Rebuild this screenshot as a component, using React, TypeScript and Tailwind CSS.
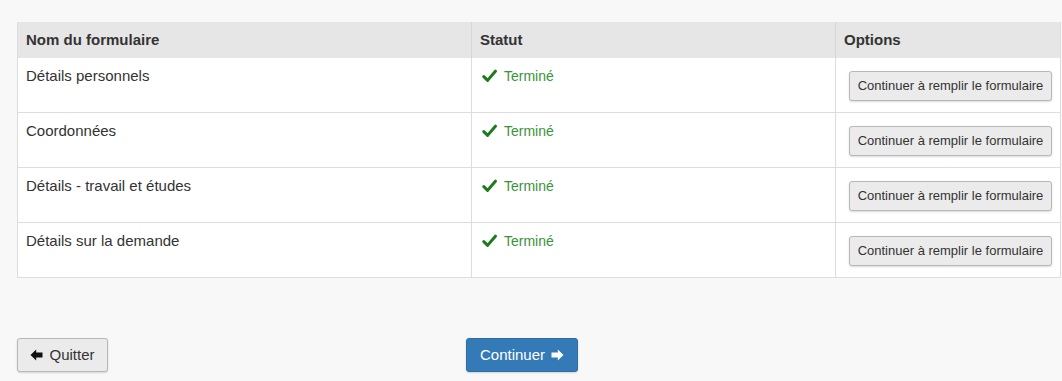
const forms = [
  "Détails personnels",
  "Coordonnées",
  "Détails - travail et études",
  "Détails sur la demande",
];

function Check() {
  return (
    <svg width="15" height="14" viewBox="0 0 15 14" className="shrink-0">
      <path d="M1.8 7.6 L5.6 11.4 L13.4 2.2" fill="none" stroke="#1d7a1d" strokeWidth="3" strokeLinecap="round" strokeLinejoin="round" />
    </svg>
  );
}

function Arrow({ dir }: { dir: "left" | "right" }) {
  return (
    <svg width="13" height="12" viewBox="0 0 13 12" className={dir === "left" ? "" : "rotate-180"}>
      <path d="M0.5 6 L6.2 0.6 L6.2 3.6 L12.5 3.6 L12.5 8.4 L6.2 8.4 L6.2 11.4 Z" fill="currentColor" strokeLinejoin="round" />
    </svg>
  );
}

export default function App() {
  return (
    <div className="min-h-[381px] bg-[#f8f8f8] pt-[22px] pl-[17px] font-['Liberation_Sans',Arial,sans-serif] text-[15px] text-[#333]">
      <div className="w-[1044px] border border-t-0 border-[#dddddd] bg-white">
        <div className="grid h-[36px] grid-cols-[453px_364px_1fr] bg-[#e6e6e6] font-bold">
          <div className="px-2 leading-[36px]">Nom du formulaire</div>
          <div className="border-l border-[#d6d6d6] px-2 leading-[36px]">Statut</div>
          <div className="border-l border-[#d6d6d6] px-2 leading-[36px]">Options</div>
        </div>
        {forms.map((name, i) => (
          <div
            key={name}
            className={`grid grid-cols-[453px_364px_1fr] border-[#dddddd] ${i === forms.length - 1 ? "h-[54px]" : "h-[55px] border-b"}`}
          >
            <div className="px-2 pt-[8px] leading-[20px]">{name}</div>
            <div className="flex items-start gap-[7px] border-l border-[#dddddd] px-[10px] pt-[8px] leading-[20px] text-[14px] text-[#3a933a]">
              <span className="mt-[3px]">
                <Check />
              </span>
              Terminé
            </div>
            <div className="border-l border-[#dddddd] pl-[13px] pt-[13px]">
              <button className="h-[30px] w-[203px] rounded-[3px] border border-[#b8b8b8] bg-[#ebebeb] text-[13px] text-[#333] shadow-[0_1px_2px_rgba(0,0,0,0.15)]">
                Continuer à remplir le formulaire
              </button>
            </div>
          </div>
        ))}
      </div>

      <div className="mt-[60px] grid grid-cols-[449px_auto] items-start">
        <button className="flex h-[34px] w-[91px] items-center justify-center gap-[6px] rounded-[3px] border border-[#b8b8b8] bg-[#ebebeb] text-[15px] text-[#333] shadow-[0_1px_2px_rgba(0,0,0,0.15)]">
          <span className="text-[#111]">
            <Arrow dir="left" />
          </span>
          Quitter
        </button>
        <button className="flex h-[34px] w-[112px] items-center justify-center gap-[6px] rounded-[3px] border border-[#2e6da4] bg-[#337ab7] text-[15px] text-white shadow-[0_1px_2px_rgba(0,0,0,0.15)]">
          Continuer
          <Arrow dir="right" />
        </button>
      </div>
    </div>
  );
}
